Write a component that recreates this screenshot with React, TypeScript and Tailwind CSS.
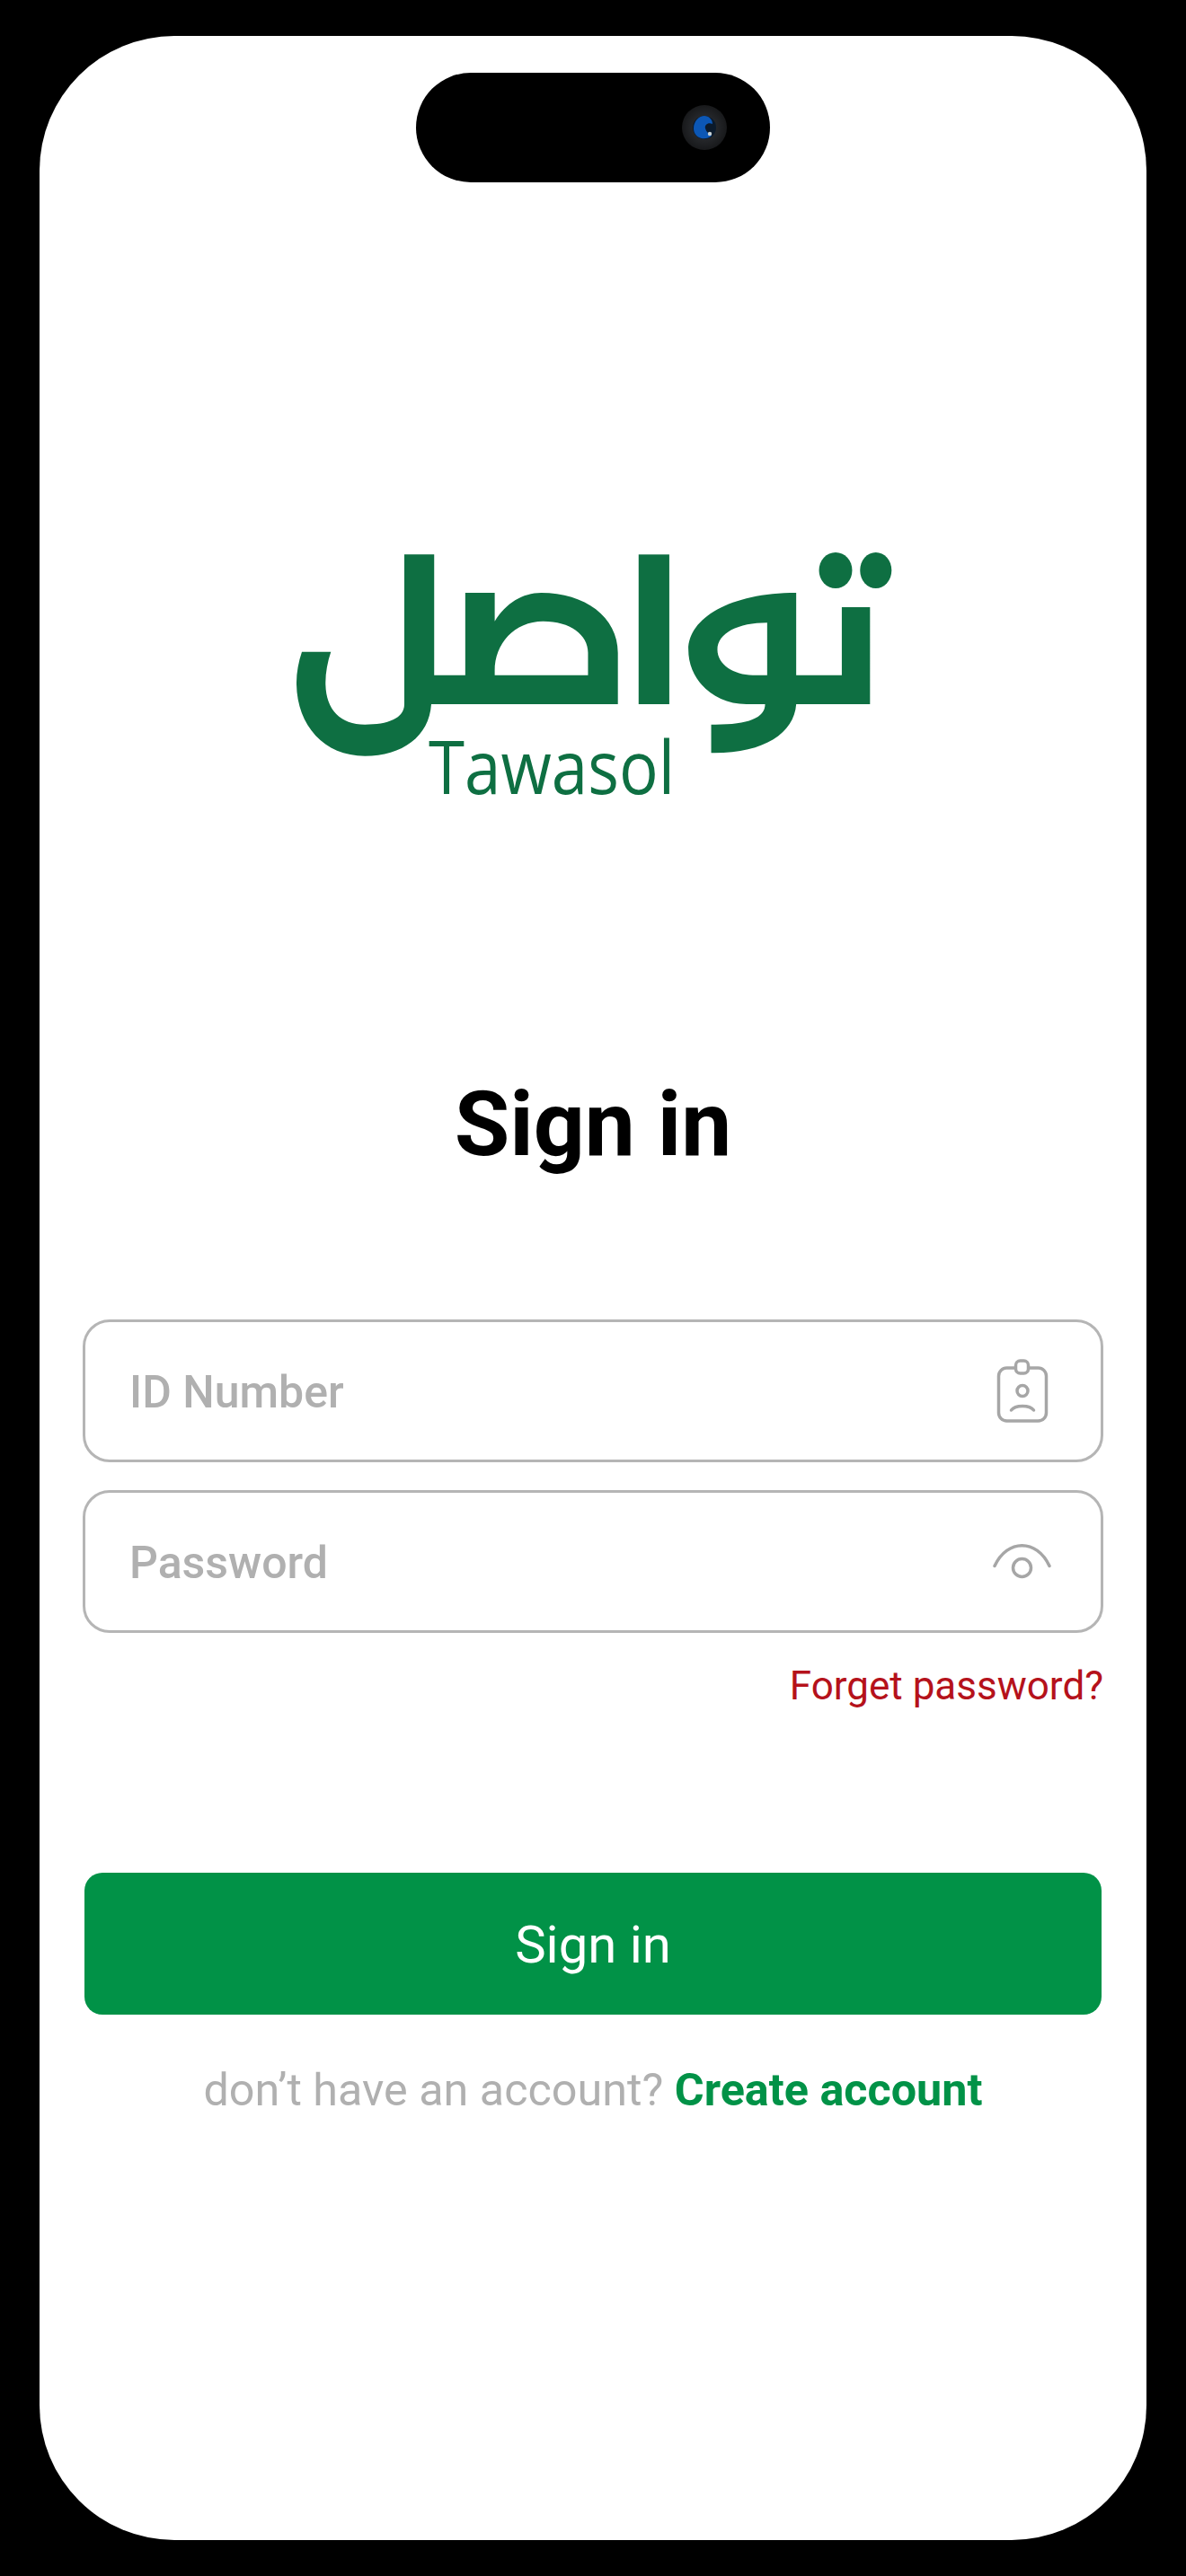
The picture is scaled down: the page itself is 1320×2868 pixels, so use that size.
/**
 * App — Tawasol sign in screen inside a phone frame
 */

import React from 'react';

const TawasolLogo: React.FC = () => (
  <svg width="720" height="340" viewBox="0 0 720 340" role="img" aria-label="Tawasol logo" className="block shrink-0">
    <g transform="scale(0.46154 0.33333)" fill="#0e6f42">
      {/* lam + sad */}
      <path
        fillRule="evenodd"
        d="M325 112H397V515H472V240H543V335C570 275 610 240 655 240C760 240 840 320 840 440V612H390C385 720 320 785 230 785C130 785 65 680 65 540C65 505 70 470 78 437H148C140 470 135 505 135 540C135 630 170 680 230 680C285 680 325 660 325 612ZM543 515H768V440C768 380 725 335 660 335C590 335 543 410 543 500Z"
      />
      {/* alif */}
      <rect x="890" y="112" width="74" height="500" />
      {/* waw + ta */}
      <path
        fillRule="evenodd"
        d="M1270 240V515H1380V288H1448V612H1270C1265 710 1190 778 1065 775V680C1150 682 1195 660 1195 612H1150C1070 612 1010 530 1010 430C1010 325 1110 240 1270 240ZM1200 340C1130 340 1080 375 1080 430C1080 480 1120 515 1165 515H1200Z"
      />
      <ellipse cx="1365" cy="165" rx="40" ry="60" />
      <ellipse cx="1462" cy="165" rx="38" ry="60" />
    </g>
    <text
      x="177"
      y="304"
      fill="#0e6f42"
      fontSize="83"
      fontWeight="400"
      textLength="274"
      lengthAdjust="spacingAndGlyphs"
      style={{ fontFamily: '"Open Sans", sans-serif' }}
    >
      Tawasol
    </text>
  </svg>
);

const CameraLens: React.FC = () => (
  <svg width="52" height="52" viewBox="0 0 52 52">
    <defs>
      <radialGradient id="housing">
        <stop offset="0%" stopColor="#34373c" />
        <stop offset="100%" stopColor="#18191b" />
      </radialGradient>
    </defs>
    <circle cx="26" cy="26" r="25" fill="url(#housing)" />
    <circle cx="26" cy="26" r="13" fill="#0b1a2b" />
    <path d="M14 27C14 19 20 13 26 13C31 13 35 17 35 22C30 20 26 23 27 27C28 31 31 33 34 35C30 39 24 39 20 37C16 35 14 31 14 27Z" fill="#0c57b5" />
    <circle cx="32" cy="33" r="2.2" fill="#c9d2d6" />
  </svg>
);

const IdBadgeIcon: React.FC = () => (
  <svg width="60" height="74" viewBox="0 0 60 74" fill="none" stroke="#a6a6a6" strokeWidth="3.5" strokeLinecap="round" className="shrink-0">
    <rect x="4.5" y="11" width="53" height="59" rx="9" />
    <rect x="23.5" y="3" width="14" height="14" rx="5" fill="#fff" />
    <circle cx="31" cy="36.5" r="6" />
    <path d="M18.5 58C23 52 39 52 43.5 58" />
  </svg>
);

const EyeIcon: React.FC = () => (
  <svg width="66" height="44" viewBox="0 0 66 44" fill="none" stroke="#a6a6a6" strokeWidth="3.5" strokeLinecap="round" className="shrink-0">
    <path d="M3 26.5C17 -4 50 -4 64 26.5" />
    <circle cx="33.5" cy="28.5" r="10" />
  </svg>
);

interface FieldProps {
  placeholder: string;
  icon: React.ReactNode;
}

const Field: React.FC<FieldProps> = ({ placeholder, icon }) => (
  <div className="flex items-center justify-between h-[159px] pl-[49px] pr-[55px] border-[3px] border-[#b5b5b5] rounded-[30px]">
    <span className="pt-[3px] text-[50px] font-medium text-[#b0b0b0]">{placeholder}</span>
    <div className="flex items-center justify-center w-[66px]">{icon}</div>
  </div>
);

export default function App() {
  return (
    <div className="h-[2868px] bg-black px-[44px] pt-[40px] font-['Roboto',sans-serif]">
      <div className="flex flex-col h-[2788px] bg-white rounded-[150px]">
        {/* Dynamic island */}
        <div className="flex items-center justify-end self-center w-[394px] h-[122px] mt-[41px] pr-[47px] bg-black rounded-full">
          <CameraLens />
        </div>

        {/* Logo */}
        <div className="flex justify-center mt-[377px]">
          <TawasolLogo />
        </div>

        <h1 className="mt-[272px] text-center text-[100px] leading-[120px] font-bold text-black">Sign in</h1>

        {/* Form */}
        <div className="flex flex-col mt-[157px] px-[48px]">
          <div className="flex flex-col gap-[31px]">
            <Field placeholder="ID Number" icon={<IdBadgeIcon />} />
            <Field placeholder="Password" icon={<EyeIcon />} />
          </div>

          <div className="mt-[29px] text-right text-[44px] leading-[60px] text-[#b5121b]">Forget password?</div>

          <button className="h-[158px] mx-[2px] mt-[178px] pt-[3px] bg-[#019247] rounded-[20px] text-[58px] text-white">Sign in</button>

          <p className="mt-[54px] text-center text-[50.3px] leading-[60px] text-[#b0b0b0]">
            don’t have an account? <span className="font-bold text-[#019247]">Create account</span>
          </p>
        </div>
      </div>
    </div>
  );
}
